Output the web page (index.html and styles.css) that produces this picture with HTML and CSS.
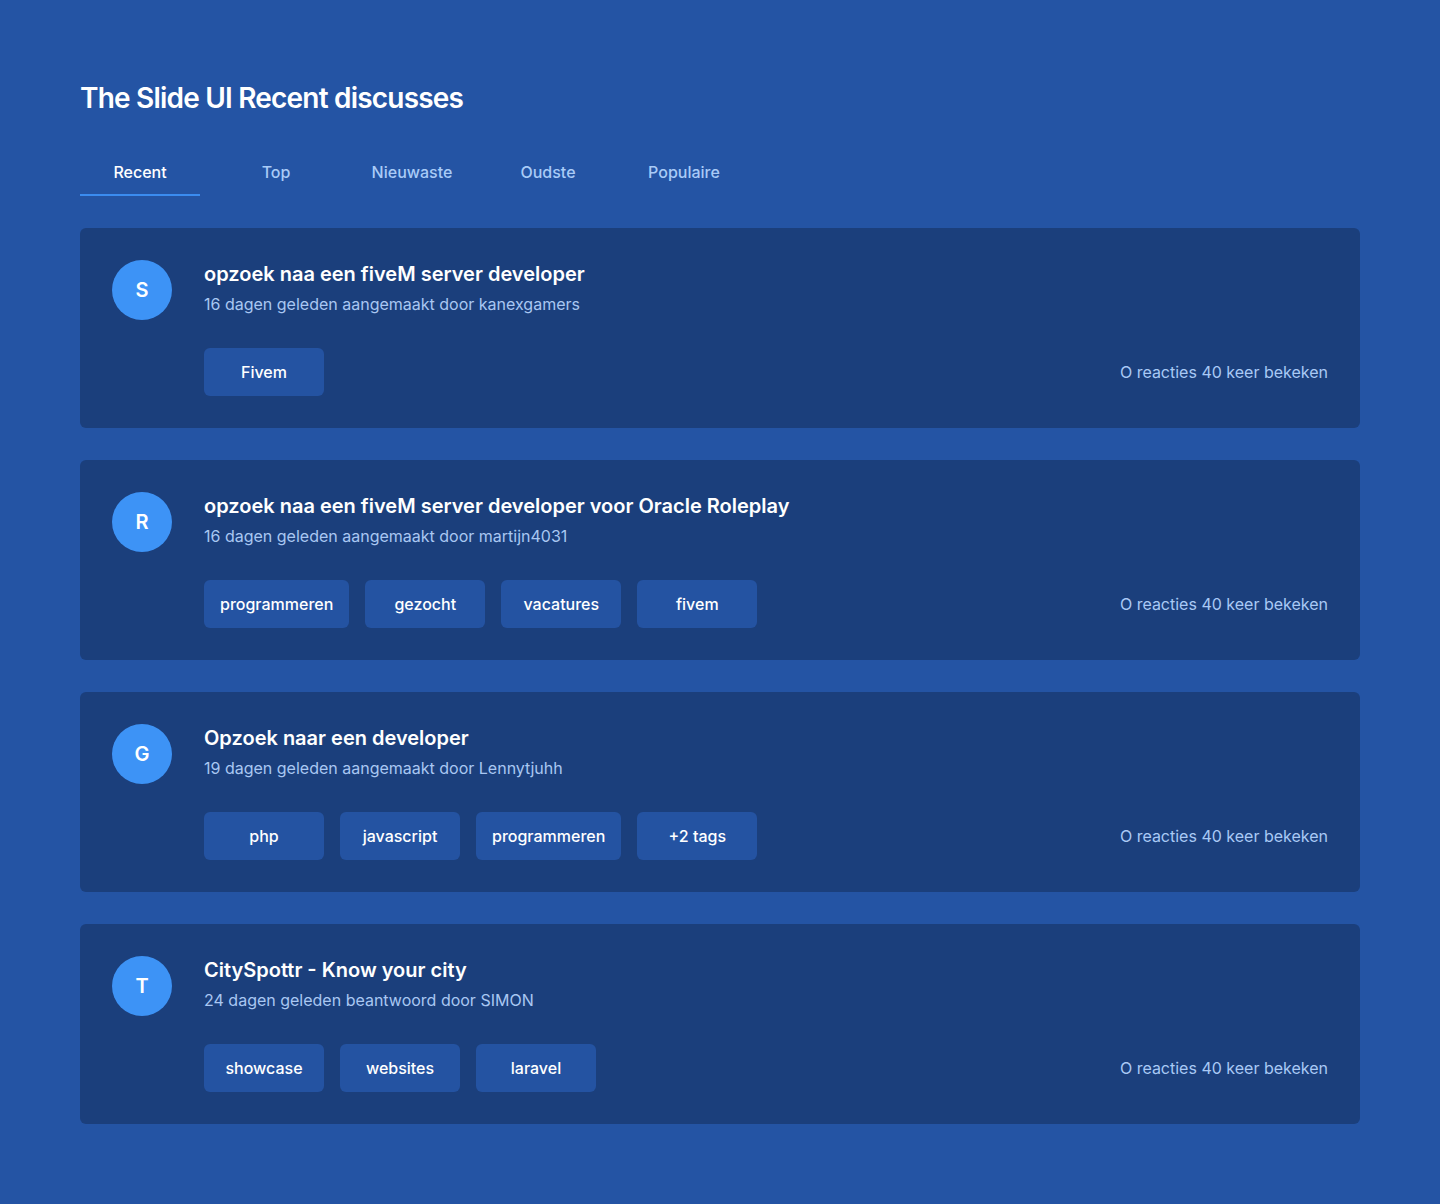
FILE: index.html
```html
<!DOCTYPE html>
<html lang="nl">
<head>
<meta charset="utf-8">
<title>The Slide UI Recent discusses</title>
<link rel="stylesheet" href="styles.css">
</head>
<body>
<main class="page">
  <h1 class="page-title">The Slide UI Recent discusses</h1>
  <nav class="tabs">
    <a class="tab tab-active">Recent</a>
    <a class="tab">Top</a>
    <a class="tab">Nieuwaste</a>
    <a class="tab">Oudste</a>
    <a class="tab">Populaire</a>
  </nav>
  <section class="list">
    <article class="card">
      <div class="avatar">S</div>
      <div class="body">
        <h2 class="title">opzoek naa een fiveM server developer</h2>
        <p class="meta">16 dagen geleden aangemaakt door kanexgamers</p>
        <div class="foot">
          <div class="tags"><span class="tag">Fivem</span></div>
          <span class="stats">O reacties 40 keer bekeken</span>
        </div>
      </div>
    </article>
    <article class="card">
      <div class="avatar">R</div>
      <div class="body">
        <h2 class="title">opzoek naa een fiveM server developer voor Oracle Roleplay</h2>
        <p class="meta">16 dagen geleden aangemaakt door martijn4031</p>
        <div class="foot">
          <div class="tags"><span class="tag">programmeren</span><span class="tag">gezocht</span><span class="tag">vacatures</span><span class="tag">fivem</span></div>
          <span class="stats">O reacties 40 keer bekeken</span>
        </div>
      </div>
    </article>
    <article class="card">
      <div class="avatar">G</div>
      <div class="body">
        <h2 class="title">Opzoek naar een developer</h2>
        <p class="meta">19 dagen geleden aangemaakt door Lennytjuhh</p>
        <div class="foot">
          <div class="tags"><span class="tag">php</span><span class="tag">javascript</span><span class="tag">programmeren</span><span class="tag">+2 tags</span></div>
          <span class="stats">O reacties 40 keer bekeken</span>
        </div>
      </div>
    </article>
    <article class="card">
      <div class="avatar">T</div>
      <div class="body">
        <h2 class="title">CitySpottr - Know your city</h2>
        <p class="meta">24 dagen geleden beantwoord door SIMON</p>
        <div class="foot">
          <div class="tags"><span class="tag">showcase</span><span class="tag">websites</span><span class="tag">laravel</span></div>
          <span class="stats">O reacties 40 keer bekeken</span>
        </div>
      </div>
    </article>
  </section>
</main>
</body>
</html>
```

FILE: styles.css
```css
* { box-sizing: border-box; }
html, body { margin: 0; padding: 0; }
body {
  background: #2454a4;
  font-family: Inter, "Noto Sans", sans-serif;
  color: #ffffff;
  min-height: 1204px;
}
.page {
  padding: 82px 80px 80px;
}
.page-title {
  margin: 0;
  font-size: 28px;
  line-height: 32px;
  font-weight: 600;
  letter-spacing: -0.8px;
  color: #ffffff;
}
.tabs {
  display: flex;
  gap: 16px;
  margin-top: 34px;
}
.tab {
  width: 120px;
  text-align: center;
  padding: 12px 0 10px;
  font-size: 16px;
  line-height: 24px;
  font-weight: 500;
  color: #a9cbf7;
  border-bottom: 2px solid transparent;
}
.tab-active {
  color: #ffffff;
  border-bottom-color: #3b8cf0;
}
.list {
  display: flex;
  flex-direction: column;
  gap: 32px;
  margin-top: 32px;
}
.card {
  display: flex;
  gap: 32px;
  background: #1b3f7c;
  border-radius: 6px;
  padding: 32px;
}
.avatar {
  flex: none;
  width: 60px;
  height: 60px;
  border-radius: 50%;
  background: #3d93f6;
  display: flex;
  align-items: center;
  justify-content: center;
  font-size: 20px;
  font-weight: 600;
  color: #ffffff;
}
.body {
  flex: 1;
  min-width: 0;
}
.title {
  margin: 0;
  font-size: 20px;
  line-height: 28px;
  font-weight: 600;
}
.meta {
  margin: 4px 0 0;
  font-size: 16px;
  line-height: 24px;
  font-weight: 400;
  color: #a9c7f2;
}
.foot {
  display: flex;
  align-items: center;
  justify-content: space-between;
  margin-top: 32px;
}
.tags {
  display: flex;
  gap: 16px;
}
.tag {
  min-width: 120px;
  height: 48px;
  padding: 0 16px;
  display: flex;
  align-items: center;
  justify-content: center;
  background: #2453a2;
  border-radius: 6px;
  font-size: 16px;
  font-weight: 500;
  color: #ffffff;
}
.stats {
  font-size: 16px;
  color: #a9c9f5;
}
```
